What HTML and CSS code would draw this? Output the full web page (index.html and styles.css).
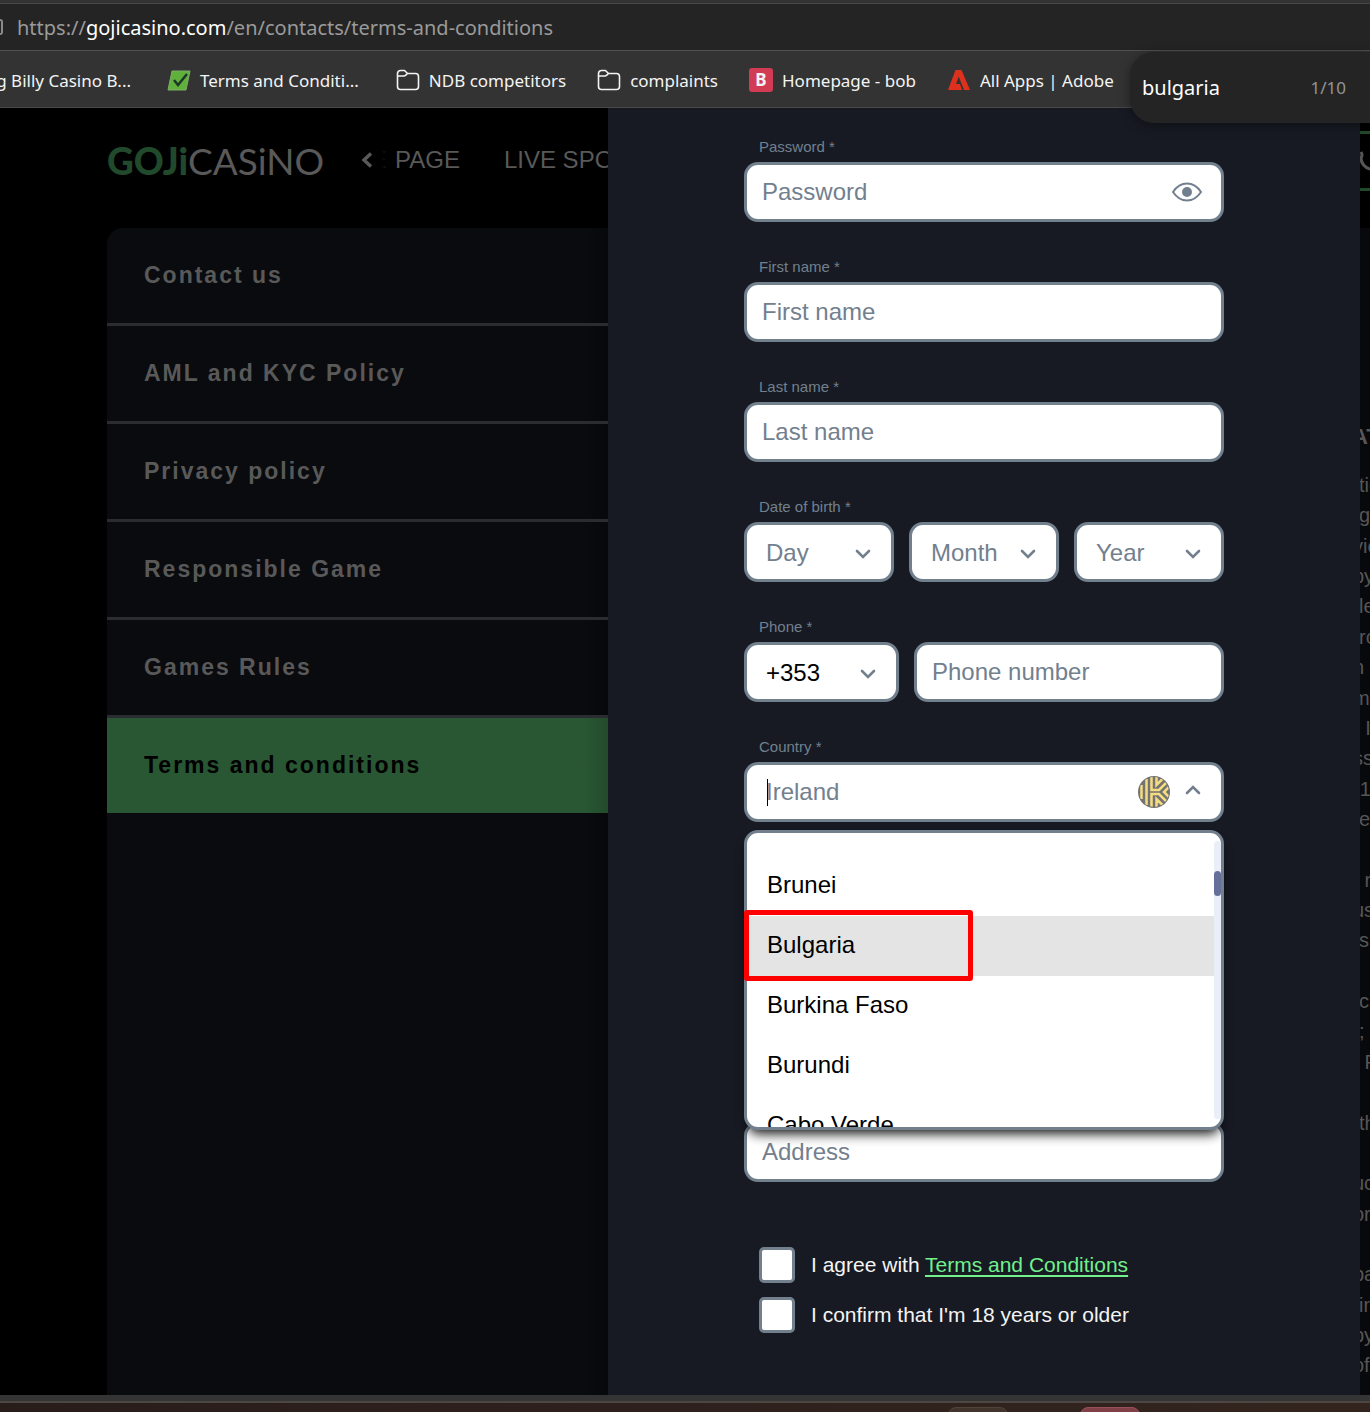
FILE: index.html
```html
<!DOCTYPE html>
<html lang="en">
<head>
<meta charset="utf-8">
<meta name="viewport" content="width=device-width, initial-scale=1">
<title>Goji Casino – Terms and conditions</title>
<link rel="stylesheet" href="styles.css">
</head>
<body>
<svg class="sprite" aria-hidden="true">
  <symbol id="folder" viewBox="0 0 24 24"><path d="M1.5 8V5.5a3 3 0 0 1 3-3h4l3 3h8a3 3 0 0 1 3 3v10a3 3 0 0 1-3 3h-15a3 3 0 0 1-3-3zM1.500 8h6.500a2 2 0 0 0 1.500-.7l2-1.800" fill="none" stroke="currentColor" stroke-width="1.600" stroke-linejoin="round"/></symbol>
  <symbol id="chevron" viewBox="0 0 16 10"><path d="M2 2l6 6 6-6" fill="none" stroke="currentColor" stroke-width="2.600" stroke-linecap="round"/></symbol>
</svg>

<div class="browser">
  <div class="address-bar">
    <span class="page-info" aria-hidden="true"></span>
    <span class="url">https://<b>gojicasino.com</b>/en/contacts/terms-and-conditions</span>
  </div>
  <nav class="bookmarks" aria-label="Bookmarks">
    <a class="bookmark bookmark-cut" href="#">g Billy Casino B...</a>
    <a class="bookmark bookmark-long" href="#">
      <svg width="24" height="24" viewBox="0 0 24 24"><path d="M5 3h18l-4 19H1z" fill="#5fb13c" stroke="#7fae68"/><path d="M7 12l4 5 9-11" fill="none" stroke="#20352a" stroke-width="2.500"/></svg>
      Terms and Conditi...</a>
    <a class="bookmark" href="#"><svg width="24" height="24"><use href="#folder"/></svg>NDB competitors</a>
    <a class="bookmark" href="#"><svg width="24" height="24"><use href="#folder"/></svg>complaints</a>
    <a class="bookmark" href="#"><span class="bob">B</span>Homepage - bob</a>
    <a class="bookmark" href="#">
      <svg width="24" height="24" viewBox="0 0 24 24"><path d="M8.500 2h6L23 22h-6L11.700 8.500 9 16h4l2 6H1z" fill="#dd301d"/></svg>
      All Apps | Adobe</a>
    <div class="find"><input aria-label="Find on page" value="bulgaria"><span>1/10</span></div>
  </nav>

  <div class="viewport">
    <div class="site">
      <header class="site-header">
        <a class="logo" href="#"><b>GOJi</b>CASiNO</a>
        <button class="prev" aria-label="Previous"><svg width="12" height="16" viewBox="0 0 12 16"><path d="M10 1.500L3 8l7 6.500" fill="none" stroke="currentColor" stroke-width="3.500"/></svg></button>
        <nav class="menu" aria-label="Main">
          <a href="#"><span class="faded">E</span>PAGE</a>
          <a href="#">LIVE SPORTS</a>
        </nav>
      </header>
      <nav class="sidebar" aria-label="Information">
        <a href="#">Contact us</a>
        <a href="#">AML and KYC Policy</a>
        <a href="#">Privacy policy</a>
        <a href="#">Responsible Game</a>
        <a href="#">Games Rules</a>
        <a class="active" href="#" aria-current="page">Terms and conditions</a>
      </nav>
    </div>

    <form class="signup">
      <div class="field">
        <label for="password">Password *</label>
        <div class="control">
          <input id="password" class="box" type="password" placeholder="Password">
          <button class="eye" type="button" aria-label="Show password"><svg width="32" height="20" viewBox="0 0 32 20"><path d="M2 10C6 4 11 1.500 16 1.500S26 4 30 10c-4 6-9 8.500-14 8.500S6 16 2 10z" fill="none" stroke="currentColor" stroke-width="2"/><circle cx="16" cy="10" r="5" fill="currentColor"/></svg></button>
        </div>
      </div>
      <div class="field">
        <label for="first">First name *</label>
        <input id="first" class="box" placeholder="First name">
      </div>
      <div class="field">
        <label for="last">Last name *</label>
        <input id="last" class="box" placeholder="Last name">
      </div>
      <div class="field">
        <label for="day">Date of birth *</label>
        <div class="row">
          <div class="control"><select id="day" class="box"><option>Day</option></select><svg class="arrow"><use href="#chevron"/></svg></div>
          <div class="control"><select class="box" aria-label="Month"><option>Month</option></select><svg class="arrow"><use href="#chevron"/></svg></div>
          <div class="control"><select class="box" aria-label="Year"><option>Year</option></select><svg class="arrow"><use href="#chevron"/></svg></div>
        </div>
      </div>
      <div class="field">
        <label for="phone">Phone *</label>
        <div class="row phone">
          <div class="control"><select class="box filled" aria-label="Country code"><option>+353</option></select><svg class="arrow"><use href="#chevron"/></svg></div>
          <input id="phone" class="box" type="tel" placeholder="Phone number">
        </div>
      </div>
      <div class="field">
        <label for="country">Country *</label>
        <div class="control">
          <input id="country" class="box combo" role="combobox" aria-expanded="true" aria-controls="countries" placeholder="Ireland">
          <span class="caret"></span>
          <svg class="keeper" width="34" height="34" viewBox="0 0 34 34" aria-hidden="true">
            <clipPath id="disc"><circle cx="17" cy="17" r="15"/></clipPath>
            <circle cx="17" cy="17" r="16" fill="#737373"/>
            <g clip-path="url(#disc)" fill="none" stroke="#f6dc80" stroke-width="2.500">
              <path d="M4.500 10v14M9.500 4v26M14.500 1v14h7.500l8-8M14.500 33V19h7.500l8 8M19.500 1v9l7-7M19.500 33v-9l7 7M32 12l-5 5 5 5"/>
            </g>
          </svg>
          <svg class="arrow up"><use href="#chevron"/></svg>
        </div>
        <div class="dropdown">
          <ul id="countries" class="options" role="listbox" aria-label="Countries">
            <li role="option">Brunei</li>
            <li role="option" aria-selected="true">Bulgaria</li>
            <li role="option">Burkina Faso</li>
            <li role="option">Burundi</li>
            <li role="option">Cabo Verde</li>
          </ul>
          <div class="scrollbar"><span></span></div>
          <div class="marker"></div>
        </div>
        <input class="box address" aria-label="Address" placeholder="Address">
      </div>
      <div class="consents">
        <div class="consent"><input type="checkbox" id="terms"><label for="terms">I agree with <a href="#">Terms and Conditions</a></label></div>
        <div class="consent"><input type="checkbox" id="adult"><label for="adult">I confirm that I'm 18 years or older</label></div>
      </div>
    </form>

    <div class="site-edge">
      <div class="edge-header">
        <button class="call" aria-label="Call us"><svg width="20" height="24" viewBox="0 0 20 24"><path d="M1 2c1 2 2 3 0 6 0 5 4 10 9 11 3-1 5 0 7 2" fill="none" stroke="currentColor" stroke-width="3"/></svg></button>
      </div>
      <div class="article">
        <h2>AT</h2>
        <ul class="lines">
          <li>tic</li><li>g</li><li class="mid">vic</li><li class="mid">by</li><li>le</li><li>ro</li><li class="mid">n</li><li class="mid">m</li><li class="mid">r I</li><li class="mid">ss</li><li class="mid">-1</li><li>e</li><li></li>
          <li>&nbsp;r</li><li class="mid">us</li><li>s</li><li></li><li>ci</li><li>;</li><li>&nbsp;F</li><li></li><li>th</li><li></li><li class="mid">uc</li><li class="mid">or</li><li></li>
          <li class="mid">ba</li><li>in</li><li class="mid">by</li><li class="mid">of</li>
        </ul>
      </div>
    </div>
  </div>

  <footer class="taskbar"><span></span><span class="red"></span></footer>
</div>
</body>
</html>
```
FILE: styles.css
```css
* { box-sizing: border-box; }

body {
  margin: 0;
  background: #000;
  font-family: "Liberation Sans", Arial, sans-serif;
}

a { color: inherit; text-decoration: none; }
ul { margin: 0; padding: 0; list-style: none; }
button { padding: 0; border: 0; background: none; color: inherit; }
input, select { font: inherit; }
svg { display: block; flex: none; }
.sprite { position: absolute; width: 0; height: 0; }

.browser {
  display: flex;
  flex-direction: column;
  min-height: 100vh;
  overflow: hidden;
}

/* Browser chrome */
.address-bar, .bookmarks {
  font-family: "Noto Sans", "Open Sans", sans-serif;
  white-space: nowrap;
}

.address-bar {
  display: flex;
  align-items: center;
  gap: 14px;
  height: 51px;
  padding-top: 4px;
  border-bottom: 1px solid #505050;
  background: linear-gradient(#333 3px, #484848 3px 4px, #242424 4px);
  color: #9a9a9a;
  font-size: 20px;
}
.address-bar b { color: #fff; font-weight: 400; }
.page-info {
  width: 3px;
  height: 16px;
  border: 2px solid #8a8a8a;
  border-left: 0;
  border-radius: 0 5px 5px 0;
}

.bookmarks {
  position: relative;
  display: flex;
  align-items: center;
  gap: 31px;
  height: 57px;
  padding-top: 2px;
  border-bottom: 1px solid #484848;
  background: #333;
  color: #f4f4f4;
  font-size: 17px;
}
.bookmark { display: flex; align-items: center; gap: 9px; }
.bookmark-cut { justify-content: flex-end; width: 136px; padding-right: 5px; }
.bookmark-long { padding-right: 6px; }
.bob {
  width: 24px;
  border-radius: 3px;
  background: #d23b54;
  font-weight: 700;
  line-height: 24px;
  text-align: center;
}

.find {
  position: absolute;
  z-index: 2;
  top: 1px;
  right: 0;
  display: flex;
  align-items: center;
  justify-content: space-between;
  width: 240px;
  height: 71px;
  padding: 0 24px 0 12px;
  border-radius: 24px 0 0 24px;
  background: #242424;
  box-shadow: 0 2px 12px rgba(0, 0, 0, .4);
  color: #949494;
}
.find input {
  width: 140px;
  padding: 0;
  border: 0;
  background: none;
  color: #fff;
  font-size: 20px;
}

/* Dimmed site behind the sign-up panel */
.viewport {
  display: grid;
  flex: 1;
  grid-template-columns: minmax(0, 1fr) 752px 10px;
}

.site {
  display: flex;
  flex-direction: column;
  padding-left: 107px;
  overflow: hidden;
  color: #595959;
}
.site-header {
  display: flex;
  align-items: center;
  height: 120px;
  padding-bottom: 16px;
  white-space: nowrap;
}
.logo {
  flex: none;
  width: 254px;
  font-family: Lato, sans-serif;
  font-size: 37px;
}
.logo b { color: #21492b; font-weight: 900; }
.prev { flex: none; width: 12px; }
.menu { display: flex; gap: 44px; font-size: 24px; }
.menu a { display: flex; gap: 8px; }
.faded {
  display: flex;
  justify-content: flex-end;
  width: 14px;
  overflow: hidden;
  color: #1a1a1a;
  -webkit-mask-image: linear-gradient(90deg, transparent 60%, #000);
  mask-image: linear-gradient(90deg, transparent 60%, #000);
}

.sidebar {
  flex: 1;
  border-top-left-radius: 16px;
  background: linear-gradient(270deg, #07080a, #0a0b0f 24px);
  overflow: hidden;
}
.sidebar a {
  display: block;
  padding: 0 37px;
  border-bottom: 3px solid #2b2c30;
  font-size: 23px;
  font-weight: 700;
  letter-spacing: 2px;
  line-height: 95px;
}
.sidebar .active {
  border: 0;
  background: linear-gradient(270deg, #234a2c, #295733 24px);
  color: #000;
}

.site-edge {
  display: flex;
  flex-direction: column;
  overflow: hidden;
  color: #565656;
}
.edge-header { height: 120px; padding-top: 23px; }
.call {
  display: flex;
  align-items: flex-start;
  width: 40px;
  height: 60px;
  padding-top: 16px;
  border: solid #21492b;
  border-width: 3px 0;
}
.article {
  display: flex;
  flex: 1;
  flex-direction: column;
  padding: 196px 0 14px;
  background: #08090c;
  white-space: nowrap;
}
.article h2 {
  margin: 0 0 20px;
  font-size: 22px;
  line-height: 26px;
  text-indent: -8px;
}
.lines { display: flex; flex: 1; flex-direction: column; font-size: 20px; }
.lines li { flex: 1; line-height: 30px; text-indent: -1px; }
.lines .mid { text-indent: -7px; }

/* Sign-up panel */
.signup {
  display: flex;
  flex-direction: column;
  gap: 34px;
  padding: 28px 136px;
  background: #171a23;
  color: #72808e;
}
.field { display: flex; flex-direction: column; }
.field label {
  margin-bottom: 4px;
  padding-left: 15px;
  font-size: 15px;
  line-height: 22px;
}
.box {
  width: 100%;
  height: 60px;
  padding: 0 15px;
  border: 3px solid #72808e;
  border-radius: 14px;
  outline: 0;
  background: #fff;
  color: #72808e;
  font-size: 24px;
  appearance: none;
}
.box::placeholder { color: #72808e; opacity: 1; }
select.box, .combo { padding: 0 19px; }
.filled { color: #000; }

.row { display: flex; gap: 15px; }
.phone { display: grid; grid-template-columns: 1fr 2fr; }
.control { position: relative; flex: 1; }
.arrow {
  position: absolute;
  top: 27px;
  right: 23px;
  width: 16px;
  height: 10px;
  pointer-events: none;
}
.arrow.up { top: 23px; transform: rotate(180deg); }
.eye { position: absolute; top: 20px; right: 21px; }
.keeper { position: absolute; top: 13px; right: 53px; }
.caret {
  position: absolute;
  top: 17px;
  left: 23px;
  width: 1px;
  height: 27px;
  background: #000;
}

.dropdown {
  position: relative;
  z-index: 1;
  height: 300px;
  margin-top: 8px;
  border: 3px solid #72808e;
  border-radius: 14px;
  background: #fff;
  box-shadow: 0 8px 12px -4px rgba(0, 0, 0, .9);
  color: #000;
  font-size: 24px;
  line-height: 58px;
}
.options { height: 100%; padding: 23px 7px 0 0; overflow: hidden; }
.options li { height: 60px; padding-left: 20px; }
.options [aria-selected] { background: #e4e4e4; }
.scrollbar {
  position: absolute;
  top: 8px;
  right: 0;
  bottom: 8px;
  width: 7px;
  padding-top: 30px;
  border-radius: 4px;
  background: #e9eef9;
}
.scrollbar span { display: block; height: 25px; border-radius: 4px; background: #65709a; }
.marker {
  position: absolute;
  top: 77px;
  left: -3px;
  width: 229px;
  height: 71px;
  border: 5px solid #f00;
  border-radius: 3px;
}
.address { margin-top: -8px; }

.consents {
  display: flex;
  flex-direction: column;
  gap: 14px;
  padding: 31px 15px 0;
  color: #f4f4f4;
  font-size: 21px;
}
.consent { display: flex; align-items: center; gap: 16px; }
.consent input {
  width: 36px;
  height: 36px;
  margin: 0;
  border: 3px solid #72808e;
  border-radius: 5px;
  background: #fff;
  appearance: none;
}
.consent a {
  color: #71f08c;
  text-decoration: underline;
  text-decoration-thickness: 2px;
  text-underline-offset: 3px;
}

.taskbar {
  display: flex;
  justify-content: flex-end;
  gap: 72px;
  height: 17px;
  padding: 6px 230px 0 0;
  border-top: 6px solid #343434;
  background: linear-gradient(#4c4743 2px, transparent 2px), linear-gradient(90deg, #291d1b, #33241e);
  overflow: hidden;
}
.taskbar span {
  width: 60px;
  height: 20px;
  border: 1px solid #50433a;
  border-radius: 8px;
  background: #40342d;
}
.taskbar .red { border-color: #98505a; background: #813f48; }
```
